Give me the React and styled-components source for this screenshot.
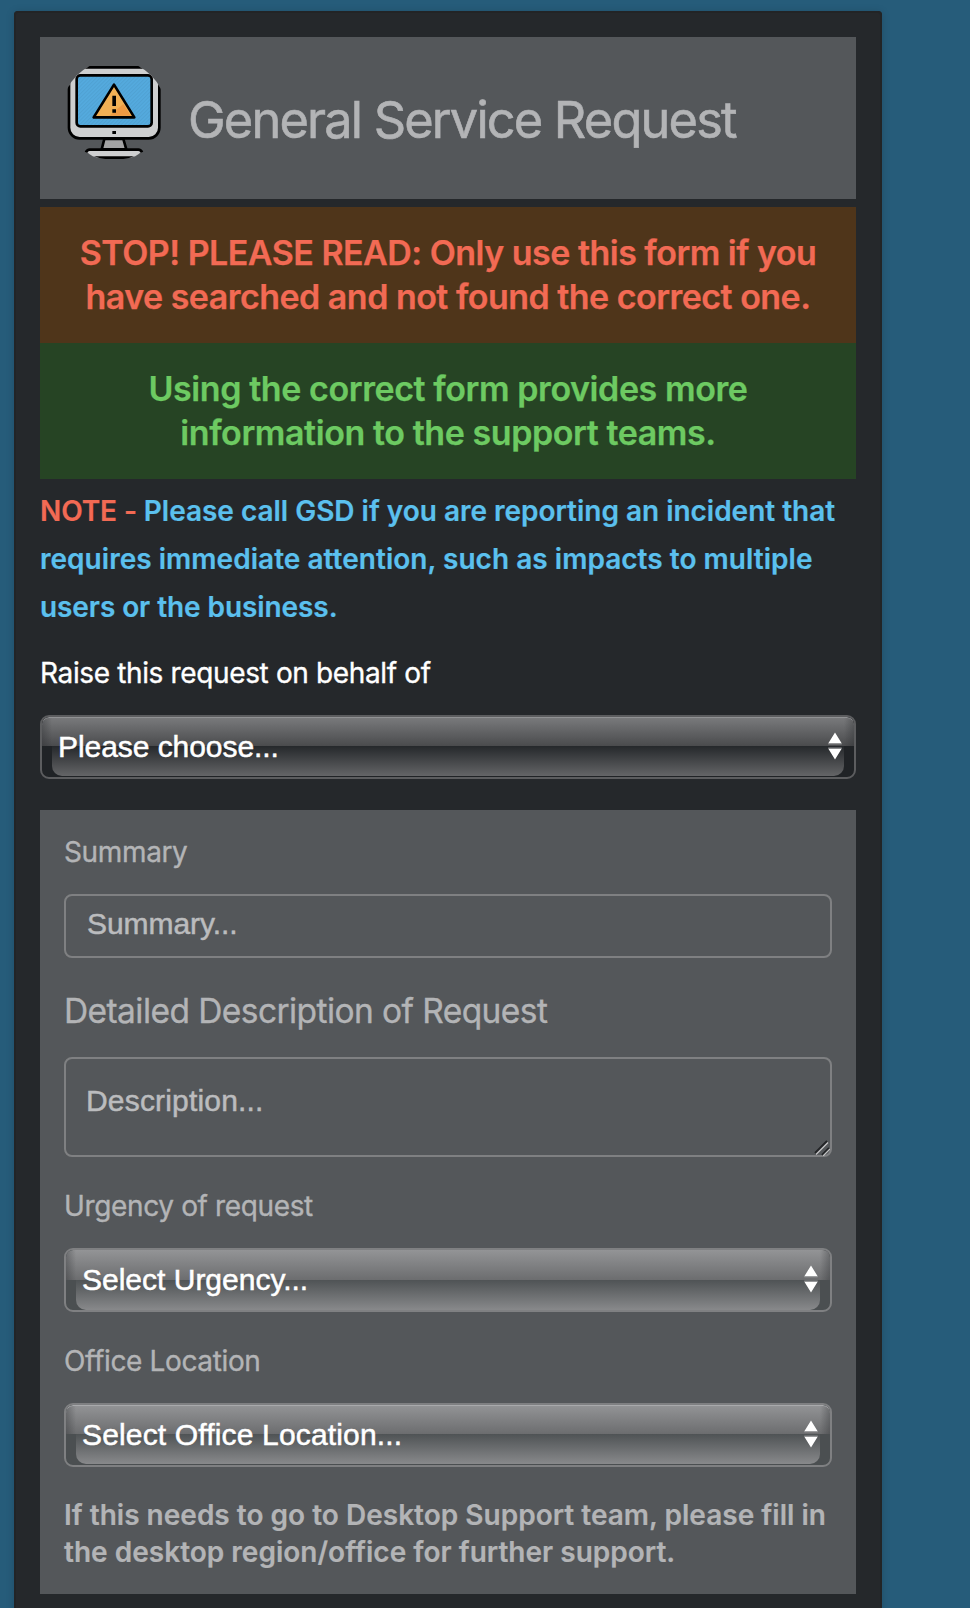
import React from "react";
import styled, { createGlobalStyle, css } from "styled-components";

const GlobalStyle = createGlobalStyle`
  *, *::before, *::after { box-sizing: border-box; }
  html { overflow: hidden; }
  body {
    margin: 0;
    height: 1608px;
    overflow: hidden;
    background: #265c7a;
    font-family: Inter, "Liberation Sans", sans-serif;
  }
  h1, h2, p { margin: 0; }
`;

const Panel = styled.main`
  width: 868px;
  height: 1640px;
  margin: 11px 0 0 14px;
  padding: 26px;
  border-radius: 4px;
  background: #25282b;
  box-shadow: inset 0 0 0 2px #222426, 0 1px 8px rgba(0, 0, 0, 0.16);
`;

const Header = styled.header`
  display: flex;
  align-items: flex-start;
  gap: 26px;
  height: 162px;
  padding: 29px 27px;
  margin-bottom: 8px;
  background: #54575a;
`;

const Title = styled.h1`
  padding: 24px 0 0 1px;
  font-size: 50.5px;
  font-weight: 400;
  line-height: 60px;
  letter-spacing: -1.82px;
  white-space: nowrap;
  -webkit-text-stroke: 0.6px #b3b4b6;
  color: #b3b4b6;
`;

const Notice = styled.p`
  padding: 24px 0;
  font-size: 34px;
  font-weight: 600;
  line-height: 44px;
  text-align: center;
  white-space: nowrap;
  -webkit-text-stroke: 0.25px currentColor;
  ${(p) =>
    p.$tone === "warning"
      ? css`
          background: #4f351a;
          color: #f26a54;
          letter-spacing: -0.52px;
        `
      : css`
          background: #264424;
          color: #6dca62;
          letter-spacing: -0.42px;
        `}
`;

const Note = styled.p`
  margin: 8px 0 25px;
  font-size: 28px;
  font-weight: 600;
  line-height: 48px;
  white-space: nowrap;
  -webkit-text-stroke: 0.2px currentColor;
  color: #5bc0ee;
`;

const NoteLine = styled.span`
  display: block;
  letter-spacing: ${(p) => p.$spacing}px;
`;

const NoteTag = styled.span`
  letter-spacing: -0.1px;
  color: #f26a54;
`;

const Label = styled.div`
  margin-bottom: 25px;
  font-size: 28px;
  line-height: 34px;
  letter-spacing: -0.36px;
  -webkit-text-stroke: 0.35px currentColor;
  color: ${(p) => (p.$bright ? "#ffffff" : "#b3b4b6")};
`;

const Heading = styled.h2`
  padding-top: 1px;
  margin-bottom: 26px;
  font-size: 33.5px;
  font-weight: 400;
  line-height: 40px;
  letter-spacing: -0.57px;
  -webkit-text-stroke: 0.35px currentColor;
  color: #b3b4b6;
`;

const Card = styled.section`
  margin-top: 31px;
  padding: 25px 24px 24px;
  background: #54575a;
`;

const Field = styled.div`
  margin-bottom: 32px;
`;

const TextBox = styled.div`
  position: relative;
  height: ${(p) => (p.$multiline ? 100 : 64)}px;
  padding: ${(p) => (p.$multiline ? "24px 20px 0" : "10px 20px 0 21px")};
  border: 2px solid #7f8082;
  border-radius: 8px;
  font-family: "Liberation Sans", Arial, sans-serif;
  font-size: 30px;
  line-height: 36px;
  letter-spacing: ${(p) => (p.$multiline ? 0.18 : -0.05)}px;
  -webkit-text-stroke: 0.5px #bbbcbe;
  color: #bbbcbe;
`;

const Grip = styled.svg`
  position: absolute;
  right: 0;
  bottom: -1px;
  width: 16px;
  height: 16px;
`;

const darkSkin = css`
  --edge: #5c5d5f;
  --side: #202326;
  --top: linear-gradient(#7a7b7d, #4a4b4d);
  --low: linear-gradient(#25282b, #646567);
  --shine: #919294;
`;

const lightSkin = css`
  --edge: #7f8082;
  --side: #4b4f51;
  --top: linear-gradient(#939496, #6c6d6f);
  --low: linear-gradient(#4f5355, #88898b);
  --shine: #a9aaac;
`;

const SelectBox = styled.div`
  ${(p) => (p.$dark ? darkSkin : lightSkin)}
  position: relative;
  display: flex;
  align-items: flex-start;
  justify-content: space-between;
  height: 64px;
  padding: 11px 13px 0 16px;
  border: 2px solid var(--edge);
  border-radius: 9px;
  overflow: hidden;
  background: var(--side);

  &::before {
    content: "";
    position: absolute;
    inset: 0 0 auto;
    height: ${(p) => (p.$flat ? 30 : 29)}px;
    border-radius: 7px 7px 0 0;
    background: linear-gradient(90deg, rgba(40, 42, 45, 0.35), transparent 10px,
      transparent calc(100% - 10px), rgba(40, 42, 45, 0.35)), var(--top);
    box-shadow: ${(p) => (p.$flat ? "none" : "inset 0 1px 0 var(--shine)")};
  }

  &::after {
    content: "";
    position: absolute;
    top: ${(p) => (p.$flat ? 30 : 29)}px;
    bottom: ${(p) => (p.$flat ? 0 : 1)}px;
    left: 10px;
    right: 10px;
    border-radius: 0 0 10px 10px;
    background: var(--low);
  }
`;

const SelectValue = styled.span`
  position: relative;
  z-index: 1;
  font-family: "Liberation Sans", Arial, sans-serif;
  font-size: 30px;
  line-height: 38px;
  letter-spacing: ${(p) => p.$spacing}px;
  -webkit-text-stroke: 0.5px #ffffff;
  color: #ffffff;
`;

const Arrows = styled.svg`
  position: relative;
  z-index: 1;
  width: 14px;
  height: 28px;
  margin: 4px -1px 0 0;
`;

const Hint = styled.p`
  margin-top: -2px;
  font-size: 28px;
  font-weight: 600;
  line-height: 36.5px;
  letter-spacing: 0.01px;
  white-space: nowrap;
  -webkit-text-stroke: 0.2px currentColor;
  color: #b3b4b6;
`;

const MonitorSvg = styled.svg`
  flex: none;
  width: 94px;
  height: 94px;
`;

function MonitorIcon() {
  return (
    <MonitorSvg viewBox="201 198 282 282" aria-hidden="true">
      <defs>
        <clipPath id="round">
          <circle cx="342" cy="337" r="157" />
        </clipPath>
        <pattern id="stripes" width="8" height="8" patternUnits="userSpaceOnUse" patternTransform="rotate(45)">
          <rect width="3" height="8" fill="#000" opacity="0.05" />
        </pattern>
      </defs>
      <g clipPath="url(#round)" stroke="#000" strokeWidth="8">
        <path d="M313 417H370L379 448H305Z" fill="#a3a3a4" />
        <rect x="207" y="202" width="271" height="213" rx="32" fill="#cecfd0" />
        <rect x="230" y="226" width="225" height="153" rx="11" fill="#54aade" />
        <rect x="234" y="230" width="217" height="145" rx="8" fill="url(#stripes)" stroke="none" />
        <path d="M342 254L281 352H403Z" fill="#f1b055" strokeLinejoin="round" />
        <path d="M370 312L392 347H328Z" fill="#ee9a43" stroke="none" />
        <path d="M337 287h11v31h-11zM337 328h11v10h-11zM337 393h11v9h-11z" fill="#000" stroke="none" />
        <path d="M261 456Q276 472 300 474H384Q408 472 423 456L416 450H268Z" fill="#cecfd0" stroke="none" />
        <path d="M258 457Q261 449 269 449H415Q423 449 426 457" fill="none" />
        <path d="M282 469H402Q384 477 370 477H316Q302 477 282 469Z" fill="#000" stroke="none" />
      </g>
    </MonitorSvg>
  );
}

function Select({ children, spacing = 0, ...skin }) {
  return (
    <SelectBox {...skin}>
      <SelectValue $spacing={spacing}>{children}</SelectValue>
      <Arrows viewBox="0 0 14 28" aria-hidden="true">
        <path d="M7 0.5L13.8 11.5H0.2ZM7 27.5L13.8 16.5H0.2Z" fill="#fff" />
        <path d="M0.2 12H13.8M0.2 16H13.8" stroke="#858688" strokeWidth="1" />
      </Arrows>
    </SelectBox>
  );
}

export default function App() {
  return (
    <>
      <GlobalStyle />
      <Panel>
        <Header>
          <MonitorIcon />
          <Title>General Service Request</Title>
        </Header>
        <Notice $tone="warning">
          STOP! PLEASE READ: Only use this form if you
          <br />
          have searched and not found the correct one.
        </Notice>
        <Notice $tone="success">
          Using the correct form provides more
          <br />
          information to the support teams.
        </Notice>
        <Note>
          <NoteLine $spacing={-0.02}>
            <NoteTag>NOTE - </NoteTag>
            Please call GSD if you are reporting an incident that
          </NoteLine>
          <NoteLine $spacing={0.03}>
            requires immediate attention, such as impacts to multiple
          </NoteLine>
          <NoteLine $spacing={-0.08}>users or the business.</NoteLine>
        </Note>
        <Label $bright>Raise this request on behalf of</Label>
        <Select $dark spacing={-0.06}>Please choose...</Select>
        <Card>
          <Field>
            <Label>Summary</Label>
            <TextBox role="textbox">Summary...</TextBox>
          </Field>
          <Field>
            <Heading>Detailed Description of Request</Heading>
            <TextBox role="textbox" $multiline>
              Description...
              <Grip viewBox="0 0 16 16" aria-hidden="true">
                <path d="M1 13L13 1M8 15L15 8" stroke="#222426" strokeWidth="1.8" />
                <path d="M2 14.5L14 2.5M9 16L16 9" stroke="#c4c5c6" strokeWidth="1.2" />
              </Grip>
            </TextBox>
          </Field>
          <Field>
            <Label>Urgency of request</Label>
            <Select $flat>Select Urgency...</Select>
          </Field>
          <Field>
            <Label>Office Location</Label>
            <Select spacing={0.16}>Select Office Location...</Select>
          </Field>
          <Hint>
            If this needs to go to Desktop Support team, please fill in
            <br />
            the desktop region/office for further support.
          </Hint>
        </Card>
      </Panel>
    </>
  );
}
